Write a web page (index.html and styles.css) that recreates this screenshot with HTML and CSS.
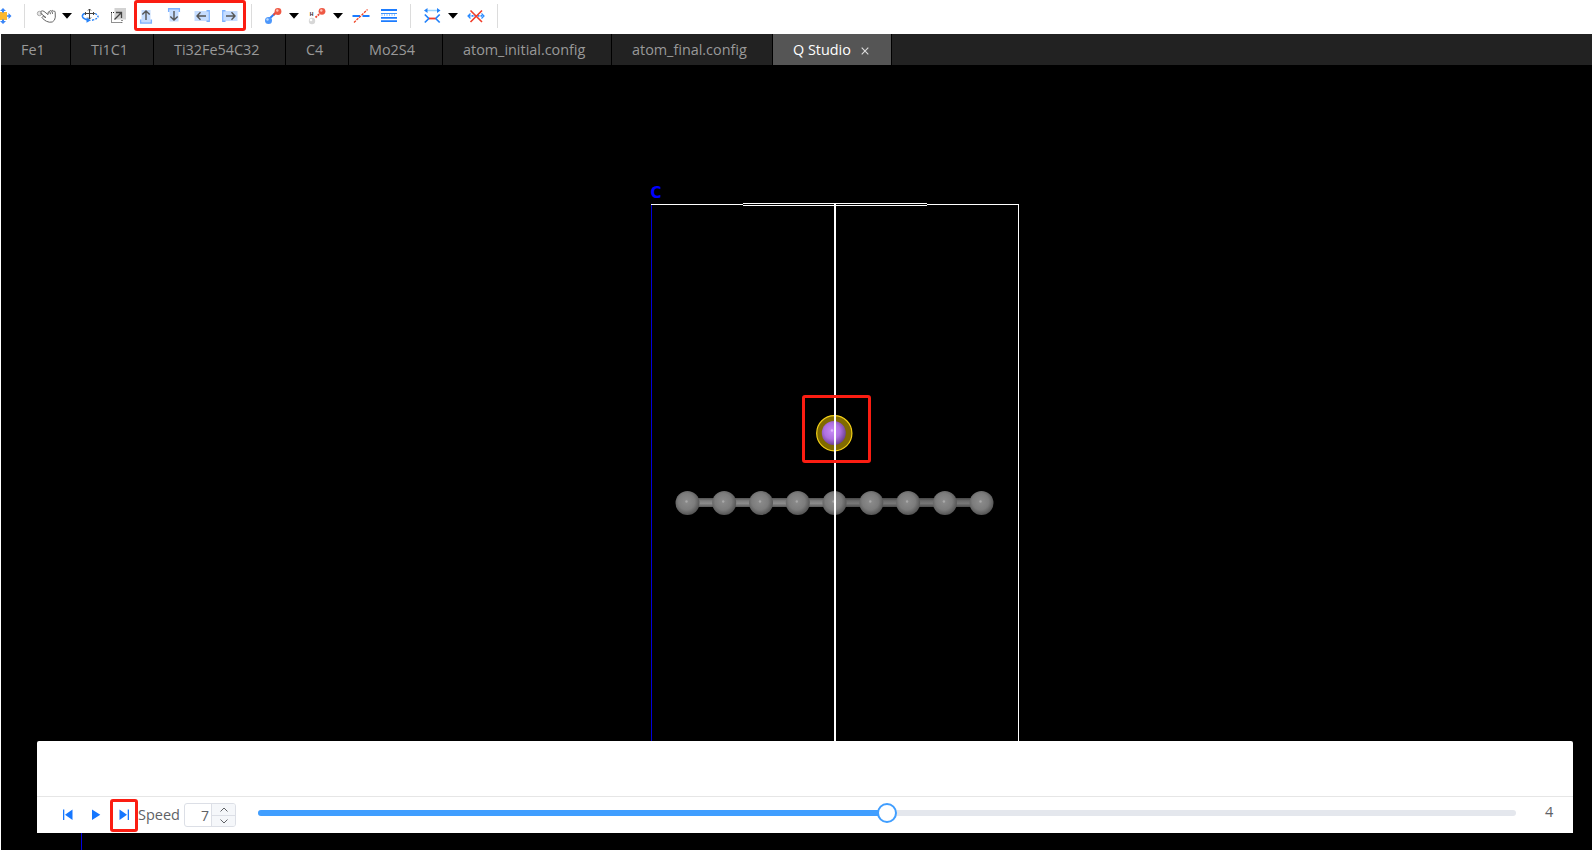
FILE: index.html
```html
<!DOCTYPE html>
<html lang="en">
<head>
<meta charset="utf-8">
<title>Q Studio</title>
<link rel="stylesheet" href="styles.css">
</head>
<body>
<div class="app">
  <header class="toolbar">
    <svg width="24" height="34" viewBox="0 0 24 34"><rect x="-5" y="12" width="12" height="8" fill="#fdb92e"/><g fill="#3b86f7"><path d="M3 8l3 3H4v1.500H2V11H0zM3 24l3-3H4v-1.500H2V21H0zM11.500 16l-3-3v2.200H7v1.600h1.500V19z"/></g></svg>
    <i class="divider"></i>
    <svg width="54" height="34" viewBox="25 0 54 34"><g fill="none" stroke="#666" stroke-width="1" stroke-linejoin="round" stroke-linecap="round"><circle cx="39.500" cy="13.500" r="2.200" stroke="#aaa" fill="#e6e6e6"/><path d="M41 11.200q1.600-.9 3 .2l4 3.200q-.3-3.300 1.500-3.300 1-1.300 2-.3 1.200-1.200 2.100.2 1.500-.4 1.600 1l.1 5q-.2 3.400-3 4.800l-3 .2q-3-.7-5-2.200l-2.300-2.500q.3-1 1.500-.9l2.500 1-5.500-4.500M49.800 11.800l.6 2M52 11.500l.5 2"/></g><path d="M62 13h10l-5 5.800z" fill="#000"/></svg>
    <svg width="26" height="34" viewBox="79 0 26 34"><path d="M89.500 9v10M84.500 13.500h10M88 10.500L89.500 9l1.500 1.500M88 17.500l1.500 1.500 1.500-1.500M86 12l-1.500 1.500L86 15M93 12l1.500 1.500L93 15" fill="none" stroke="#444"/><path d="M84.500 13.500q-2.500 1.300-2.100 3 .7 2.700 6.100 3.400" fill="none" stroke="#2683fa" stroke-width="1.500"/><path d="M86.500 17.500l4.500 2.700-4.500 2.600z" fill="#2683fa"/><path d="M92 20.200q6-1.300 6-3.700-.5-2-3-2.800" fill="none" stroke="#2683fa" stroke-width="1.400" stroke-dasharray="2 1.200"/></svg>
    <svg width="29" height="34" viewBox="105 0 29 34"><rect x="114.500" y="8" width="11.500" height="11.500" fill="#d2d2d2"/><path d="M111 12.500h3.500M111.500 12.500v10h10.500v-3" fill="none" stroke="#222" stroke-dasharray="1 1"/><path d="M114.500 19.500l7-7M116 12.500h5.500V18" fill="none" stroke="#444" stroke-width="1.300"/></svg>
    <div class="move-group mark">
      <svg width="24" height="28" viewBox="137 3 24 28"><rect x="141.500" y="10" width="9" height="12" fill="#c6ddff"/><path d="M140.700 19.500V23h10.600v-3.500" fill="none" stroke="#7db2ff" stroke-width="1.500"/><path d="M146 20v-9M142.300 14.500L146 11l3.700 3.500" fill="none" stroke="#555" stroke-width="1.400"/></svg>
      <svg width="27" height="28" viewBox="161 3 27 28"><rect x="169.500" y="9" width="9" height="12.500" fill="#c6ddff"/><path d="M168.700 12V8.700h10.600V12" fill="none" stroke="#7db2ff" stroke-width="1.500"/><path d="M174 11v9M170.300 16.500L174 20l3.700-3.500" fill="none" stroke="#555" stroke-width="1.400"/></svg>
      <svg width="27" height="28" viewBox="188 3 27 28"><rect x="194.500" y="11" width="14" height="10" fill="#c6ddff"/><path d="M206.500 10.700h2.700v10.600h-2.700" fill="none" stroke="#7db2ff" stroke-width="1.400"/><path d="M206 16h-9M200.500 12.300L197 16l3.500 3.700" fill="none" stroke="#555" stroke-width="1.400"/></svg>
      <svg width="28" height="28" viewBox="215 3 28 28"><rect x="223.500" y="11" width="14" height="10" fill="#c6ddff"/><path d="M225.500 10.700h-2.700v10.600h2.700" fill="none" stroke="#7db2ff" stroke-width="1.400"/><path d="M226 16h9M231.500 12.300L235 16l-3.500 3.700" fill="none" stroke="#555" stroke-width="1.400"/></svg>
    </div>
    <i class="divider gap-left"></i>
    <svg width="52" height="34" viewBox="252 0 52 34"><path d="M269 19l7-6.500" stroke="#2f7ff5" stroke-width="2"/><path d="M273.500 15l3-3" stroke="#ee4b38" stroke-width="2"/><circle cx="268.500" cy="20.500" r="3.500" fill="#4c97fb"/><circle cx="267.500" cy="19.500" r="1.200" fill="#b8d8ff"/><circle cx="278" cy="11.500" r="3.400" fill="#ee5844"/><circle cx="277.300" cy="10.500" r="1.200" fill="#ffc3b8"/><path d="M289 13h10l-5 5.800z" fill="#000"/></svg>
    <svg width="45" height="34" viewBox="304 0 45 34"><text x="309.800" y="16" class="h-label">H</text><path d="M315.500 17.500l5-4.500" stroke="#ee4b38" stroke-width="1.800" stroke-dasharray="2 1"/><circle cx="312" cy="21" r="3.200" fill="#d7d7d7"/><circle cx="311" cy="20" r="1.300" fill="#fff"/><circle cx="322" cy="11.300" r="3.400" fill="#ee5844"/><circle cx="321.300" cy="10.500" r="1.200" fill="#ffc3b8"/><path d="M333 13h10l-5 5.800z" fill="#000"/></svg>
    <svg width="25" height="34" viewBox="349 0 25 34"><path d="M352.500 16h7.500M362.500 16h7" stroke="#1c7cff" stroke-width="2.200"/><path d="M354 22.500l13.500-13" stroke="#f04425" stroke-width="1.300" stroke-dasharray="2.500 1"/></svg>
    <svg width="36" height="34" viewBox="374 0 36 34"><path d="M381 9h16v2h-16zM381 17h16v1.800h-16zM381 20.300h16v1.800h-16z" fill="#1c7cff"/><path d="M381 13.500h16" stroke="#3b93ff"/><path d="M381.500 15h15" stroke="#3b93ff" stroke-dasharray="1 1.500"/></svg>
    <i class="divider"></i>
    <svg width="51" height="34" viewBox="411 0 51 34"><path d="M427.500 10.500h9.500" stroke="#38aefa" stroke-width="1.600" stroke-dasharray="1 1"/><path d="M427.500 8l-3.500 2.500 3.500 2.500zM437 8l3.500 2.500L437 13z" fill="#2382fa"/><path d="M424.800 14.500l4 4-4 4M439.700 14.500l-4 4 4 4" fill="none" stroke="#2382fa" stroke-width="1.700"/><path d="M429 18.500h6.500" stroke="#f13c29" stroke-width="1.800"/><path d="M448 13h10l-5 5.800z" fill="#000"/></svg>
    <svg width="35" height="34" viewBox="462 0 35 34"><path d="M468.500 15.900h15" stroke="#2a8bff" stroke-width="1.800" stroke-dasharray="2 1"/><path d="M470.500 13.500L468 16l2.500 2.500M481.500 13.500L484 16l-2.500 2.500" fill="none" stroke="#2a8bff" stroke-width="1.200"/><path d="M470.500 10.500l11.500 11.500M482 10.500l-11.500 11.500" stroke="#f13c29" stroke-width="1.600"/></svg>
    <i class="divider"></i>
  </header>

  <main class="workspace">
    <nav class="tabs">
      <span class="tab w-fe">Fe1</span>
      <span class="tab w-tic">Ti1C1</span>
      <span class="tab w-tife">Ti32Fe54C32</span>
      <span class="tab w-c4">C4</span>
      <span class="tab w-mos">Mo2S4</span>
      <span class="tab w-initial">atom_initial.config</span>
      <span class="tab w-final">atom_final.config</span>
      <span class="tab w-studio active">Q Studio<svg width="8" height="8" viewBox="0 0 8 8"><path d="M.7 .7l6.600 6.600M7.300 .7L.7 7.300" stroke="#ddd" stroke-width="1.100"/></svg></span>
    </nav>

    <section class="stage">
      <svg class="scene" width="1591" height="785" viewBox="1 65 1591 785">
        <defs>
          <radialGradient id="carbon" cx=".46" cy=".44" r=".57"><stop offset="0" stop-color="#8c8c8c"/><stop offset=".6" stop-color="#7c7c7c"/><stop offset="1" stop-color="#525252"/></radialGradient>
          <radialGradient id="lithium" cx=".43" cy=".42" r=".6"><stop offset="0" stop-color="#c78bf6"/><stop offset=".55" stop-color="#ae70e0"/><stop offset="1" stop-color="#6c418f"/></radialGradient>
          <linearGradient id="bond" x1="0" y1="0" x2="0" y2="1"><stop offset="0" stop-color="#525252"/><stop offset=".3" stop-color="#7c7c7c"/><stop offset=".6" stop-color="#8c8c8c"/><stop offset="1" stop-color="#5a5a5a"/></linearGradient>
          <g id="atom"><circle r="12" fill="url(#carbon)"/><circle cx="-1" cy="-1.500" r="1.200" fill="#b5b5b5" opacity=".7"/></g>
        </defs>
        <text x="650.500" y="198" class="axis-label">C</text>
        <g shape-rendering="crispEdges">
          <rect x="651" y="205" width="1" height="536" fill="#0000d8"/>
          <rect x="81" y="833" width="1" height="17" fill="#0000e0"/>
          <path d="M651 204h92v1h-92zM927 204h92v1h-92zM743 203h184v1H743zM743 205h184v1H743zM1018 204h1v537h-1z" fill="#fff"/>
        </g>
        <rect x="687" y="498" width="147" height="9" fill="url(#bond)"/>
        <rect x="834" y="498" width="147" height="9" fill="url(#bond)" opacity=".85"/>
        <use href="#atom" x="687.500" y="503"/><use href="#atom" x="724.200" y="503"/><use href="#atom" x="761" y="503"/><use href="#atom" x="797.800" y="503"/><use href="#atom" x="834.500" y="503"/><use href="#atom" x="871.300" y="503"/><use href="#atom" x="908.100" y="503"/><use href="#atom" x="944.900" y="503"/><use href="#atom" x="981.500" y="503"/>
        <circle cx="834.300" cy="433.200" r="17.600" fill="#806a00" stroke="#f3d016" stroke-width="1.200"/>
        <circle cx="833.800" cy="433" r="12" fill="url(#lithium)"/>
        <circle cx="832" cy="430.500" r="1.200" fill="#e0b8ff"/>
        <rect x="834" y="203" width="2" height="538" fill="#fff"/>
        <rect x="803.500" y="396.500" width="66" height="65" rx="1.500" fill="none" stroke="#fb1d12" stroke-width="3"/>
      </svg>

      <div class="player">
        <div class="player-head"></div>
        <div class="controls">
          <svg class="buttons" width="72" height="35" viewBox="38 797 72 35"><path d="M63 809.500h1.300v10.500H63zM72.500 809.500V820l-7.500-5.250zM92 809.500v10.500l8.300-5.250z" fill="#1677ff"/></svg>
          <div class="next mark"><svg width="22" height="27" viewBox="113 802 22 27"><path d="M119.500 809.500V820l7.500-5.250zM127.700 809.500h1.300v10.500h-1.300z" fill="#1677ff"/></svg></div>
          <span class="speed">Speed</span>
          <div class="stepper">
            <span class="value">7</span>
            <div class="arrows">
              <span><svg width="8" height="5" viewBox="0 0 8 5"><path d="M.5 4.500L4 1l3.500 3.500" fill="none" stroke="#606266"/></svg></span>
              <span><svg width="8" height="5" viewBox="0 0 8 5"><path d="M.5 .5L4 4 7.500 .5" fill="none" stroke="#606266"/></svg></span>
            </div>
          </div>
          <div class="slider"><div class="fill"></div><div class="thumb"></div></div>
          <span class="frame">4</span>
        </div>
      </div>
    </section>
  </main>
</div>
</body>
</html>
```

FILE: styles.css
```css
* { box-sizing: border-box; }
body { margin: 0; background: #fff; font-family: "Open Sans", "Noto Sans", sans-serif; font-size: 14px; overflow: hidden; }
svg { display: block; flex: none; }
.app { width: 1592px; height: 850px; display: flex; flex-direction: column; }

.toolbar { height: 34px; display: flex; background: #fff; }
.divider { flex: none; width: 1px; height: 24px; margin-top: 4px; background: #dcdcdc; }
.gap-left { margin-left: 5px; }
.mark { border: 3px solid #fb1d12; border-radius: 3px; }
.move-group { display: flex; flex: none; width: 112px; height: 31px; overflow: hidden; }
.h-label { font: bold 5px "Liberation Sans", sans-serif; fill: #222; }

.workspace { flex: 1; margin-left: 1px; background: #000; }
.tabs { height: 31px; display: flex; background: #222; }
.tab { flex: none; display: flex; align-items: center; padding: 0 0 1px 20px; border-right: 1px solid #000; color: #999; font-size: 14.4px; white-space: nowrap; }
.tab.active { background: #555; color: #fff; gap: 10px; }
.tab.active svg { margin-top: 3px; }
.w-fe { width: 70px; }
.w-tic { width: 83px; }
.w-tife { width: 132px; }
.w-c4 { width: 63px; }
.w-mos { width: 94px; }
.w-initial { width: 169px; }
.w-final { width: 161px; }
.w-studio { width: 119px; }

.stage { position: relative; height: 785px; }
.axis-label { font: bold 15px "DejaVu Sans", sans-serif; fill: #00f; }

.player { position: absolute; left: 36px; top: 676px; width: 1536px; height: 92px; display: flex; flex-direction: column; background: #fff; border-radius: 2px 2px 0 0; }
.player-head { height: 56px; border-bottom: 1px solid #e6e6e6; }
.controls { height: 36px; display: flex; color: #606266; }
.buttons { margin-left: 1px; }
.next { flex: none; width: 28px; height: 33px; margin-top: 2px; }
.speed { flex: none; width: 46px; padding-top: 7px; font-size: 14.5px; line-height: 22px; }
.stepper { flex: none; display: flex; width: 52px; height: 24px; margin-top: 6px; border: 1px solid #dcdfe6; border-radius: 3px; overflow: hidden; }
.value { flex: 1; padding-left: 16px; font-size: 14px; line-height: 23px; }
.arrows { width: 24px; border-left: 1px solid #dcdfe6; background: #f5f7fa; }
.arrows span { height: 11px; display: flex; align-items: center; justify-content: center; }
.arrows span + span { border-top: 1px solid #dcdfe6; }
.slider { flex: none; position: relative; width: 1258px; height: 6px; margin: 13px 0 0 22px; border-radius: 3px; background: #e4e7ed; }
.fill { width: 50%; height: 6px; border-radius: 3px; background: #409eff; }
.thumb { position: absolute; left: 619px; top: -7px; width: 20px; height: 20px; border: 2px solid #409eff; border-radius: 50%; background: #fff; }
.frame { margin-left: 29px; padding-top: 4px; font-size: 14.5px; line-height: 22px; }
```
